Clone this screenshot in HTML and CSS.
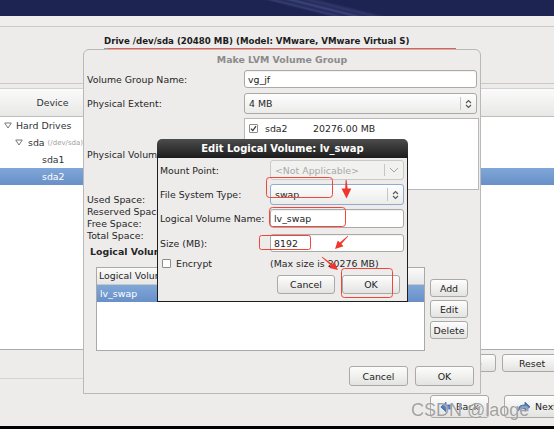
FILE: index.html
```html
<!DOCTYPE html>
<html lang="en">
<head>
<meta charset="utf-8">
<title>Make LVM Volume Group</title>
<link rel="stylesheet" href="styles.css">
</head>
<body>
<div class="screen">
  <div class="banner"></div>
  <div class="strip"></div>
  <div class="drive">
    <div class="drive-label">Drive /dev/sda (20480 MB) (Model: VMware, VMware Virtual S)</div>
    <div class="partbar"><span class="pb-small"></span><span class="pb-sel"></span></div>
  </div>
  <div class="devtable">
    <div class="thead">
      <div class="th-device">Device</div>
      <div class="th-rest"></div>
    </div>
    <div class="tbody">
      <div class="trow lvl0"><svg class="exp" width="8" height="7" viewBox="0 0 8 7"><polygon points="0.7,1 7.3,1 4,6" fill="none" stroke="#6a6a6a" stroke-width="0.9"/></svg><span>Hard Drives</span></div>
      <div class="trow lvl1"><svg class="exp" width="8" height="7" viewBox="0 0 8 7"><polygon points="0.7,1 7.3,1 4,6" fill="none" stroke="#6a6a6a" stroke-width="0.9"/></svg><span>sda</span><span class="dim">(/dev/sda)</span></div>
      <div class="trow lvl2"><span>sda1</span></div>
      <div class="trow lvl2 sel"><span>sda2</span></div>
    </div>
  </div>
  <div class="lower">
    <div class="actrow">
      <div class="actline"></div>
      <button class="btn act">Delete</button>
      <button class="btn act last">Reset</button>
    </div>
    <div class="navrow">
      <button class="btn nav back"><svg width="12" height="12" viewBox="0 0 12 12"><path d="M0.8 6 L6 1.2 L6 4 L11.2 4 L11.2 8 L6 8 L6 10.8 Z" fill="#4a7cc4" stroke="#2a5596" stroke-width="0.7"/></svg><span>Back</span></button>
      <button class="btn nav next"><svg width="14" height="12" viewBox="0 0 14 12"><path d="M1 10 C1 5 4 4 8 4 L8 1.2 L13 5.8 L8 10.4 L8 7.6 C5 7.6 3 8 1 10 Z" fill="#4a7cc4" stroke="#2a5596" stroke-width="0.7"/></svg><span>Next</span></button>
    </div>
  </div>
  <div class="blackbar"></div>

  <div class="lvm">
    <div class="lvm-title">Make LVM Volume Group</div>
    <div class="lrow r-name">
      <span>Volume Group Name:</span>
      <div class="entry">vg_jf</div>
    </div>
    <div class="lrow r-extent">
      <span>Physical Extent:</span>
      <div class="combo"><span class="val">4 MB</span><span class="sep"></span><span class="arr"><svg width="7" height="10" viewBox="0 0 7 10"><path d="M1 4 L3.5 1.5 L6 4 M1 6 L3.5 8.5 L6 6" fill="none" stroke="#555" stroke-width="1.1"/></svg></span></div>
    </div>
    <div class="lrow r-pv">
      <span>Physical Volumes to Use:</span>
      <div class="pvlist">
        <div class="pvrow"><span class="chk"><svg width="7" height="7" viewBox="0 0 7 7"><path d="M1 3.6 L2.8 5.6 L6 1.2" fill="none" stroke="#333" stroke-width="1.2"/></svg></span><span class="pvname">sda2</span><span>20276.00 MB</span></div>
      </div>
    </div>
    <div class="spaces">
      <div>Used Space:</div>
      <div>Reserved Space:</div>
      <div>Free Space:</div>
      <div>Total Space:</div>
    </div>
    <div class="lv-title">Logical Volumes</div>
    <div class="lv-area">
      <div class="lvlist">
        <div class="lvhead">Logical Volume Name</div>
        <div class="lvrow sel">lv_swap</div>
      </div>
      <div class="lvbtns">
        <button class="btn side">Add</button>
        <button class="btn side">Edit</button>
        <button class="btn side">Delete</button>
      </div>
    </div>
    <div class="lvm-btns">
      <button class="btn dlgbtn">Cancel</button>
      <button class="btn dlgbtn">OK</button>
    </div>
  </div>

  <div class="edit">
    <div class="edit-title">Edit Logical Volume: lv_swap</div>
    <div class="edit-body">
      <div class="erow e-mount">
        <span>Mount Point:</span>
        <div class="combo disabled"><span class="val">&lt;Not Applicable&gt;</span><span class="sep"></span><span class="arr wide"><svg width="10" height="6" viewBox="0 0 10 6"><path d="M1 1 L5 5 L9 1" fill="none" stroke="#a5a5a5" stroke-width="1"/></svg></span></div>
      </div>
      <div class="erow e-fs">
        <span>File System Type:</span>
        <div class="combo focus"><span class="val">swap</span><span class="sep"></span><span class="arr"><svg width="7" height="10" viewBox="0 0 7 10"><path d="M1 4 L3.5 1.5 L6 4 M1 6 L3.5 8.5 L6 6" fill="none" stroke="#555" stroke-width="1.1"/></svg></span></div>
      </div>
      <div class="erow e-name">
        <span>Logical Volume Name:</span>
        <div class="entry">lv_swap</div>
      </div>
      <div class="erow e-size">
        <span>Size (MB):</span>
        <div class="entry">8192</div>
      </div>
      <div class="erow e-enc">
        <span class="enc"><span class="chk"></span><span>Encrypt</span></span>
        <span>(Max size is 20276 MB)</span>
      </div>
      <div class="edit-btns">
        <button class="btn ebtn">Cancel</button>
        <button class="btn ebtn">OK</button>
      </div>
    </div>
  </div>

  <svg class="marks" width="554" height="429" viewBox="0 0 554 429">
    <g fill="none" stroke="#f0453b" stroke-width="1">
      <rect x="266.5" y="177.5" width="66" height="20" rx="3"/>
      <rect x="269.5" y="207.5" width="76" height="19" rx="3"/>
      <rect x="259.5" y="235.5" width="51" height="14" rx="2"/>
      <rect x="341.5" y="268.5" width="51" height="29" rx="3"/>
    </g>
    <g fill="#f0362c">
      <polygon points="345.6,180 345.2,188.5 341.5,188.5 346.5,198.5 351.3,188.5 347.6,188.5 346.6,180"/>
      <polygon points="348.2,236.2 341.4,244 343.5,246.2 335,249 337.8,240.5 339.9,242.6 347.8,235.8"/>
      <polygon points="321.75,257.31 331.16,265.73 329.27,268.05 338,270 334.31,261.85 332.42,264.17 322.25,256.69"/>
    </g>
  </svg>

  <div class="watermark">CSDN @laoge</div>
</div>
</body>
</html>
```
FILE: styles.css
```css
* { box-sizing: border-box; margin: 0; padding: 0; }
html, body { width: 554px; height: 429px; overflow: hidden; }
body {
  background: #edeceb;
  font-family: "DejaVu Sans", "Noto Sans", sans-serif;
  font-size: 9.4px;
  color: #262626;
}
.screen {
  position: relative;
  width: 554px;
  height: 429px;
  display: flex;
  flex-direction: column;
  overflow: hidden;
}

/* top banner */
.banner {
  flex: none;
  height: 16px;
  background: linear-gradient(14deg, #1e2452 0%, #1e2452 53%, #353c70 54.5%, #232a5b 56%, #3b4378 57.5%, #262d5e 59%, #30376a 60.5%, #1e2452 62.5%, #1e2452 100%);
}
.strip {
  flex: none;
  height: 11px;
  background: #efeeed;
  border-bottom: 1px solid #cbcbca;
}

/* drive area */
.drive {
  flex: none;
  height: 57px;
  padding: 9px 0 0 104px;
  border-bottom: 1px solid #c9c9c8;
}
.drive-label {
  font-weight: bold;
  font-size: 8.65px;
  line-height: 11px;
  height: 11px;
  white-space: nowrap;
  color: #1c1c1c;
}
.partbar { display: flex; margin-top: 1px; height: 30px; width: 352px; }
.pb-small { width: 4px; height: 5px; border: 1px solid #9a9a9a; background: #fff; }
.pb-sel { flex: 1; border: 1px solid #ef5a4c; background: #fff; }

/* device table */
.devtable { flex: none; margin-top: 4px; display: flex; flex-direction: column; }
.thead {
  height: 29px;
  display: flex;
  background: linear-gradient(#fbfbfb, #e8e8e7);
  border-top: 1px solid #d2d2d1;
  border-bottom: 1px solid #bdbdbc;
}
.th-device {
  width: 106px;
  display: flex;
  align-items: center;
  justify-content: center;
  border-right: 1px solid #d0d0cf;
  color: #2e3436;
}
.th-rest { flex: 1; }
.tbody { height: 232px; background: #fff; }
.trow {
  height: 17px;
  display: flex;
  align-items: center;
  white-space: nowrap;
  color: #2e3436;
}
.lvl0 { padding-left: 4px; }
.lvl0 .exp { margin-right: 4px; }
.lvl1 { padding-left: 15px; }
.lvl1 .exp { margin-right: 5px; }
.lvl2 { padding-left: 42px; }
.sel { background: linear-gradient(#80a7d8, #6890c8); color: #fff; }
.dim { font-size: 7px; color: #a0a0a0; margin-left: 3px; }

/* lower area */
.lower {
  flex: none;
  height: 77px;
  border-top: 1px solid #aaaaa9;
  display: flex;
  flex-direction: column;
}
.actrow { height: 29px; display: flex; align-items: flex-start; }
.actline { flex: 1; align-self: stretch; border-bottom: 1px solid #d3d3d2; margin-right: 6px; }
.act { width: 60px; height: 18px; margin-top: 4px; margin-right: 6px; }
.act.last { margin-right: -8px; }
.navrow { height: 47px; display: flex; justify-content: flex-end; padding-top: 16px; }
.nav { width: 59px; height: 23px; gap: 4px; }
.back { margin-right: 15px; }
.next { margin-right: -9px; border-color: #729ed4; justify-content: flex-start; padding-left: 7px; }
.blackbar { flex: none; height: 3px; background: #000; }

/* buttons */
.btn {
  font: inherit;
  color: #222;
  background: linear-gradient(#fdfdfd, #e3e3e2);
  border: 1px solid #a9a9a8;
  border-radius: 3px;
  display: flex;
  align-items: center;
  justify-content: center;
  flex: none;
}

/* LVM dialog */
.lvm {
  position: absolute;
  left: 83px;
  top: 49px;
  width: 398px;
  height: 345px;
  background: #edeceb;
  border: 1px solid #b9b9b8;
  border-radius: 6px 6px 0 0;
  padding: 0 3px;
  display: flex;
  flex-direction: column;
}
.lvm-title {
  height: 19px;
  line-height: 19px;
  text-align: center;
  font-weight: bold;
  color: #8b8b8b;
  white-space: nowrap;
}
.lrow {
  display: grid;
  grid-template-columns: 157px 233px;
  align-items: center;
  white-space: nowrap;
}
.r-name { margin-top: 1px; height: 18px; }
.r-extent { margin-top: 5px; height: 21px; }
.r-pv { margin-top: 4px; height: 72px; }
.entry {
  height: 100%;
  background: #fff;
  border: 1px solid #a9a9a8;
  border-radius: 3px;
  display: flex;
  align-items: center;
  padding-left: 3px;
  box-shadow: inset 0 1px 1px rgba(0, 0, 0, 0.06);
  color: #222;
}
.combo {
  height: 100%;
  display: flex;
  align-items: center;
  border: 1px solid #a9a9a8;
  border-radius: 3px;
  background: linear-gradient(#fefefe, #ebebea);
}
.combo .val { flex: 1; padding-left: 4px; }
.combo .sep { width: 1px; align-self: stretch; margin: 3px 0; background: #c6c6c5; }
.combo .arr { width: 15px; display: flex; justify-content: center; align-items: center; }
.combo .arr.wide { width: 18px; }
.combo.disabled { background: #f1f1f0; border-color: #c9c9c8; color: #a9a9a9; }
.combo.focus { border-color: #8eabd0; }

.pvlist {
  height: 100%;
  width: 235px;
  background: #fff;
  border: 1px solid #b8b8b7;
}
.pvrow { height: 17px; margin-top: 1px; display: flex; align-items: center; padding-left: 4px; }
.chk {
  width: 9px;
  height: 9px;
  border: 1px solid #8c8c8c;
  border-radius: 1px;
  background: #fff;
  display: inline-flex;
  align-items: center;
  justify-content: center;
  flex: none;
}
.pvname { width: 48px; margin-left: 7px; }

.spaces { margin-top: 4px; line-height: 12px; white-space: nowrap; }
.lv-title { margin-top: 4px; line-height: 12px; padding-left: 3px; font-weight: bold; white-space: nowrap; }
.lv-area { margin-top: 9px; display: flex; height: 84px; }
.lvlist {
  margin-left: 9px;
  width: 329px;
  height: 84px;
  background: #fff;
  border: 1px solid #a9a9a8;
}
.lvhead {
  height: 17px;
  line-height: 16px;
  padding-left: 2px;
  background: linear-gradient(#fbfbfb, #e6e6e5);
  border-bottom: 1px solid #c8c8c7;
  white-space: nowrap;
}
.lvrow { height: 17px; line-height: 17px; padding-left: 3px; }
.lvbtns { margin-left: 5px; width: 38px; padding-top: 12px; display: flex; flex-direction: column; gap: 3px; }
.side { width: 38px; height: 18px; }
.lvm-btns { margin-top: 15px; display: flex; justify-content: flex-end; gap: 7px; padding-right: 3px; }
.dlgbtn { width: 59px; height: 20px; }

/* Edit dialog */
.edit {
  position: absolute;
  left: 157px;
  top: 139px;
  width: 251px;
  height: 163px;
  display: flex;
  flex-direction: column;
}
.edit-title {
  height: 19px;
  line-height: 19px;
  background: linear-gradient(#4d4d4d, #1c1c1c);
  border-radius: 5px 5px 0 0;
  color: #fff;
  font-weight: bold;
  font-size: 10px;
  text-align: center;
  white-space: nowrap;
}
.edit-body {
  flex: 1;
  background: #edeceb;
  border: 1px solid #1e1e1e;
  border-top: none;
  padding: 0 3px 0 2px;
}
.erow {
  display: grid;
  grid-template-columns: 110px 134px;
  align-items: center;
  white-space: nowrap;
}
.e-mount { margin-top: 2px; height: 20px; }
.e-fs { margin-top: 4px; height: 21px; }
.e-name { margin-top: 4px; height: 19px; }
.e-size { margin-top: 6px; height: 18px; }
.e-enc { margin-top: 5px; height: 12px; }
.enc { display: flex; align-items: center; gap: 5px; padding-left: 2px; }
.edit-btns { margin-top: 6px; display: flex; justify-content: flex-end; gap: 7px; padding-right: 4px; }
.ebtn { width: 58px; height: 19px; }

/* annotations */
.marks { position: absolute; left: 0; top: 0; pointer-events: none; }
.watermark {
  position: absolute;
  left: 411px;
  top: 400px;
  font-family: "Liberation Sans", Arial, sans-serif;
  font-size: 18px;
  color: rgba(120, 120, 120, 0.7);
  text-shadow: 0 0 1px #fff;
  white-space: nowrap;
  pointer-events: none;
}
```
